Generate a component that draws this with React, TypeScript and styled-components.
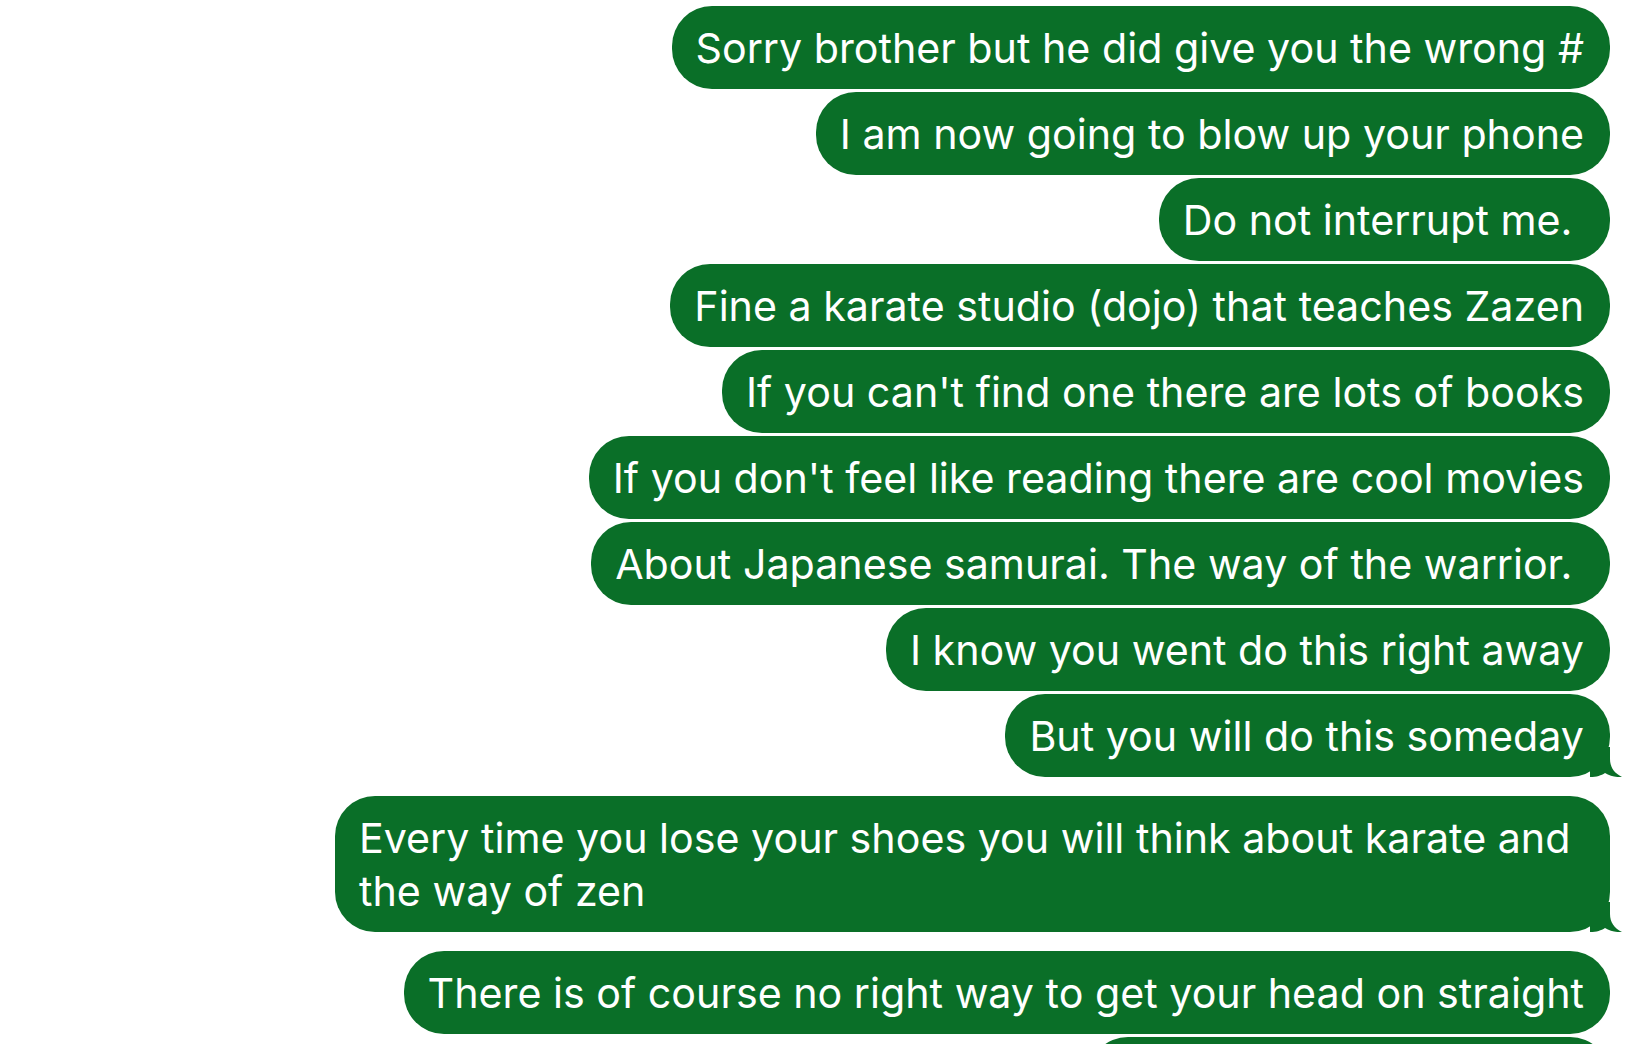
import React from "react";
import styled, { createGlobalStyle } from "styled-components";

const GREEN = "#0a6f28";

const GlobalStyle = createGlobalStyle`
  html, body {
    margin: 0;
    padding: 0;
    background: #ffffff;
  }
  body {
    font-family: Inter, "Noto Sans", "Liberation Sans", sans-serif;
  }
`;

interface Message {
  text: string;
  tail?: boolean;
}

const messages: Array<Message> = [
  { text: "Sorry brother but he did give you the wrong #" },
  { text: "I am now going to blow up your phone" },
  { text: "Do not interrupt me. " },
  { text: "Fine a karate studio (dojo) that teaches Zazen" },
  { text: "If you can't find one there are lots of books" },
  { text: "If you don't feel like reading there are cool movies" },
  { text: "About Japanese samurai. The way of the warrior. " },
  { text: "I know you went do this right away" },
  { text: "But you will do this someday", tail: true },
  {
    text: "Every time you lose your shoes you will think about karate and the way of zen",
    tail: true,
  },
  { text: "There is of course no right way to get your head on straight" },
  { text: "You must keep on trying" },
];

const Thread = styled.div`
  width: 1650px;
  height: 1044px;
  overflow: hidden;
  box-sizing: border-box;
  padding: 6px 40px 0 0;
  display: flex;
  flex-direction: column;
  align-items: flex-end;
`;

const Bubble = styled.div<{ $tail?: boolean }>`
  position: relative;
  flex-shrink: 0;
  max-width: 1275px;
  box-sizing: border-box;
  padding: 16px 26px 14px 24px;
  margin-bottom: ${(p) => (p.$tail ? "19px" : "3px")};
  border-radius: 40px;
  background: ${GREEN};
  color: #ffffff;
  font-size: 41.2px;
  line-height: 53px;
  white-space: pre-wrap;
`;

const Tail = styled.svg`
  position: absolute;
  right: -12px;
  bottom: 0;
  width: 32px;
  height: 30px;
`;

const App = () => {
  return (
    <>
      <GlobalStyle />
      <Thread>
        {messages.map((m, i) => (
          <Bubble key={i} $tail={m.tail}>
            {m.text}
            {m.tail && (
              <Tail viewBox="0 0 32 30">
                <path
                  d="M0 0 L20 0 L20 12 C20 20 24 26 32 30 C26 30.5 20 29 15 26 C11 28.5 7 30 0 30 Z"
                  fill={GREEN}
                />
              </Tail>
            )}
          </Bubble>
        ))}
      </Thread>
    </>
  );
};

export default App;
